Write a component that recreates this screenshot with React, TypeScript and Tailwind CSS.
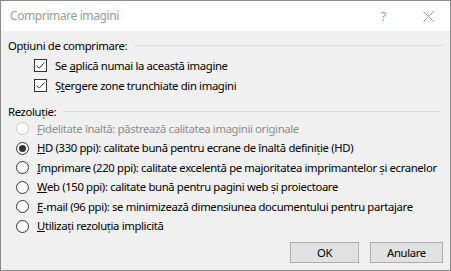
import React from 'react'

const font = { fontFamily: '"Noto Sans", "Open Sans", sans-serif' }

function Check() {
  return (
    <span className="flex h-[13px] w-[13px] shrink-0 items-center justify-center border border-[#333] bg-white">
      <svg width="11" height="11" viewBox="0 0 11 11">
        <path d="M1.5 5.5 L4.2 8.2 L9.5 2.5" fill="none" stroke="#333" strokeWidth="1" />
      </svg>
    </span>
  )
}

function Radio({ on, disabled }: { on?: boolean; disabled?: boolean }) {
  return (
    <span
      className={`flex h-[13px] w-[13px] shrink-0 items-center justify-center rounded-full border bg-white ${
        disabled ? 'border-[#cccccc]' : 'border-[#333]'
      }`}
    >
      {on && <span className="h-[7px] w-[7px] rounded-full bg-[#333]" />}
    </span>
  )
}

function Group({ title, lineClass, children }: { title: string; lineClass: string; children: React.ReactNode }) {
  return (
    <div>
      <div className="flex items-center h-[17px]">
        <span>{title}</span>
        <span className={`ml-[7px] h-px bg-[#dcdcdc] ${lineClass}`} />
      </div>
      {children}
    </div>
  )
}

const radios: { key: string; rest: string; on?: boolean; disabled?: boolean }[] = [
  { key: 'F', rest: 'idelitate înaltă: păstrează calitatea imaginii originale', disabled: true },
  { key: 'H', rest: 'D (330 ppi): calitate bună pentru ecrane de înaltă definiție (HD)', on: true },
  { key: 'I', rest: 'mprimare (220 ppi): calitate excelentă pe majoritatea imprimantelor și ecranelor' },
  { key: 'W', rest: 'eb (150 ppi): calitate bună pentru pagini web și proiectoare' },
  { key: 'E', rest: '-mail (96 ppi): se minimizează dimensiunea documentului pentru partajare' },
  { key: 'U', rest: 'tilizați rezoluția implicită' },
]

export default function App() {
  return (
    <div
      className="flex h-[271px] w-[451px] flex-col border border-[#8a8a8a] bg-[#f0f0f0] text-[11.3px] leading-[16px] tracking-[-0.35px] text-black whitespace-nowrap"
      style={font}
    >
      {/* title bar */}
      <div className="flex h-[30px] shrink-0 items-center bg-white pl-[9px] text-[#9a9a9a]">
        <span className="text-[12px] tracking-[-0.4px]">Comprimare imagini</span>
        <span className="ml-auto mr-[37px] text-[13px]">?</span>
        <svg className="mr-[16px]" width="11" height="11" viewBox="0 0 11 11">
          <path d="M0.5 0.5 L10.5 10.5 M10.5 0.5 L0.5 10.5" stroke="#9a9a9a" strokeWidth="1" />
        </svg>
      </div>

      <div className="flex flex-1 flex-col pl-[7px] pr-[6px] pt-[6px]">
        <Group title="Opțiuni de comprimare:" lineClass="flex-1">
          <div className="flex flex-col gap-[3px] pl-[26px] pt-[3px]">
            <div className="flex h-[17px] items-center gap-[8px]">
              <Check />
              <span>
                Se <u>a</u>plică numai la această imagine
              </span>
            </div>
            <div className="flex h-[17px] items-center gap-[8px]">
              <Check />
              <span>
                Ș<u>t</u>ergere zone trunchiate din imagini
              </span>
            </div>
          </div>
        </Group>

        <div className="mt-[9px]">
          <Group title="Rezoluție:" lineClass="flex-1 mr-[4px]">
            <div className="flex flex-col gap-[2.5px] pl-[8px] pt-0">
              {radios.map((r) => (
                <div key={r.key} className="flex h-[17px] items-center gap-[8px]">
                  <Radio on={r.on} disabled={r.disabled} />
                  <span className={r.disabled ? 'text-[#8d8d8d]' : ''}>
                    <u>{r.key}</u>
                    {r.rest}
                  </span>
                </div>
              ))}
            </div>
          </Group>
        </div>

        <div className="mt-auto mb-[7px] flex justify-end gap-[11px] pr-[1px]">
          <button className="h-[21px] w-[69px] border border-[#adadad] bg-[#e1e1e1]">OK</button>
          <button className="h-[21px] w-[73px] border border-[#adadad] bg-[#e1e1e1]">Anulare</button>
        </div>
      </div>
    </div>
  )
}
